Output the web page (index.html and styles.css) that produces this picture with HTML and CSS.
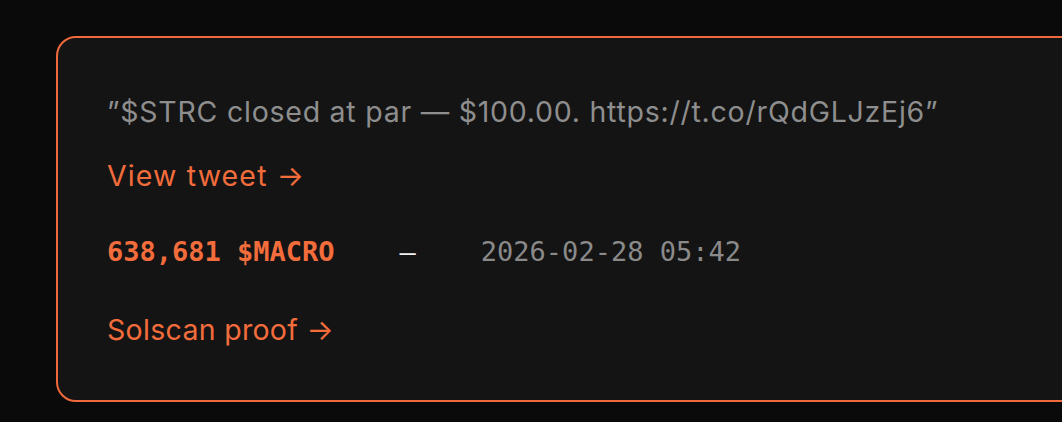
FILE: index.html
```html
<!DOCTYPE html>
<html>
<head>
<meta charset="utf-8">
<link rel="stylesheet" href="styles.css">
</head>
<body>
<div class="page">
  <div class="card">
    <p class="quote">”$STRC closed at par — $100.00. https://t.co/rQdGLJzEj6”</p>
    <a class="link view" href="#">View tweet →</a>
    <div class="meta">
      <span class="amount">638,681 $MACRO</span>
      <span class="dash">–</span>
      <span class="date">2026-02-28 05:42</span>
    </div>
    <a class="link proof" href="#">Solscan proof →</a>
  </div>
</div>
</body>
</html>
```
FILE: styles.css
```css
html, body {
  margin: 0;
  padding: 0;
  background: #0a0a0a;
  overflow: hidden;
}
.page {
  padding: 36px 0 0 56px;
  width: 1200px;
}
.card {
  width: 1100px;
  box-sizing: border-box;
  border: 2px solid #ee6a3c;
  border-radius: 20px;
  background: #141414;
  padding: 52px 48px 48px 49px;
  display: flex;
  flex-direction: column;
  align-items: flex-start;
  font-family: Inter, "Noto Sans", sans-serif;
  font-size: 28.5px;
  line-height: 44px;
  letter-spacing: 0.75px;
}
.quote {
  margin: 0 0 20px 0;
  color: #8e8e8e;
}
.link {
  color: #f26c3c;
  text-decoration: none;
}
.view {
  margin-bottom: 32px;
  letter-spacing: 1.15px;
}
.proof {
  letter-spacing: 0.3px;
}
.meta {
  display: flex;
  gap: 65px;
  font-family: "DejaVu Sans Mono", "Liberation Mono", monospace;
  font-size: 27px;
  letter-spacing: 0;
  margin-bottom: 34px;
}
.amount {
  color: #f26c3c;
  font-weight: bold;
}
.dash {
  color: #f0f0f0;
}
.date {
  color: #8a8a8a;
}
```
